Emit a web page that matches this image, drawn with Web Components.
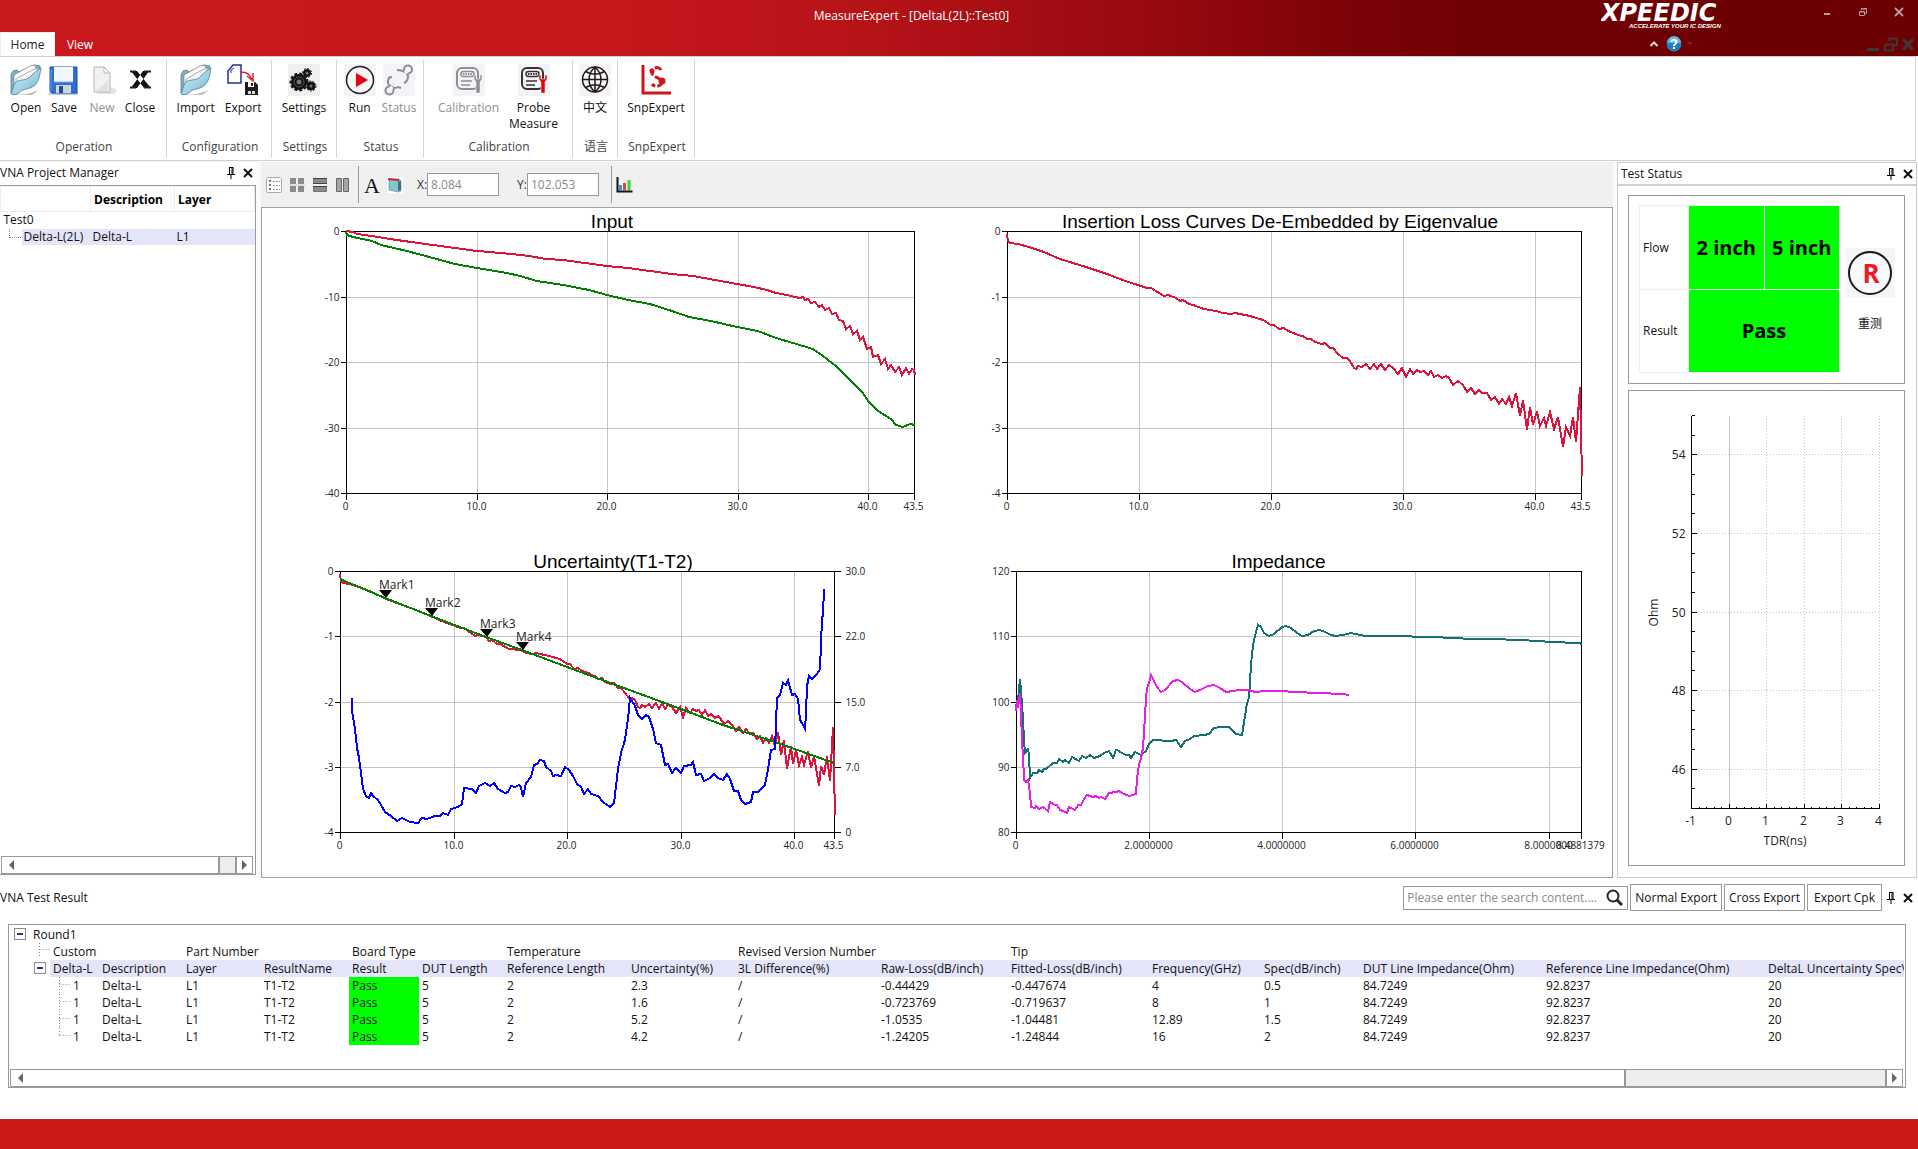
<!DOCTYPE html>
<html lang="en">
<head>
<meta charset="utf-8">
<title>MeasureExpert</title>
<style>
html, body { margin: 0; height: 100%; background: #fff; }
body { font: 12px/17px "Open Sans", "Noto Sans CJK SC", sans-serif; color: #111; overflow: hidden; }
</style>
</head>
<body>
<measure-app></measure-app>
<script>
const FOLDER = `<defs><linearGradient id="f" x1="0" y1="0" x2="1" y2="1"><stop offset="0" stop-color="#d9eff6"/><stop offset=".6" stop-color="#9ccfe3"/><stop offset="1" stop-color="#5fa4c0"/></linearGradient></defs>
<path d="M6 31h16l7-5-12 4z" fill="#bbb"/><path d="M1 29 V11 L3 7 L7 6 L9 8 L24 1 L30 2 L30 6 L6 26z" fill="#7fb0c4" stroke="#4c7f95" stroke-width=".8"/>
<path d="M4 22 V11 L20 2 L25 1 L27 10 L8 26z" fill="#fff" stroke="#888" stroke-width=".8"/><path d="M6 24 V15 L22 6 L28 4 L27 12" fill="#f4f4f4" stroke="#999" stroke-width=".8"/>
<path d="M1 30 C3 25 4 20 6 18 C10 15 17 17 21 12 C24 9 27 6 31 4 C30 10 29 17 25 21 C20 26 12 24 9 29 C7 31 3 31 1 30z" fill="url(#f)" stroke="#4c8299" stroke-width=".8"/>`;
const METER = (c, w) => `<rect width="32" height="32" fill="#f3f4f7"/><rect x="4" y="4" width="21" height="21" rx="5" fill="none" stroke="${c}" stroke-width="2"/><rect x="8" y="7.500" width="13" height="5" rx="2.500" fill="none" stroke="${c}" stroke-width="1.500"/><path d="M10 10h9" stroke="${c}" stroke-width="2" stroke-dasharray="1.500 1"/><path d="M8 17h11M8 21h9" stroke="${c}" stroke-width="1.500"/><path d="M21 11 v4 l2 3 v11 h4 v-11 l2-3 v-4 l-2 0 v4 h-4 v-4z" fill="${w}" stroke="#f3f4f7" stroke-width=".5"/>`;
const ICONS = {
  open: [32, 32, FOLDER],
  save: [32, 32, `<rect x="1" y="28" width="29" height="3" fill="#bcd"/><path d="M2 3h27v26H4l-2-2z" fill="#2e6fd0" stroke="#1b4fa3"/><rect x="6" y="3" width="19" height="15" fill="#f3f6fb"/><path d="M6 18h19" stroke="#7fb0ee"/><rect x="8" y="21" width="15" height="8" fill="#cfd5dc"/><rect x="11" y="22" width="4" height="7" fill="#1f4d9a"/><path d="M3 5v22" stroke="#6aa0ea"/>`],
  new: [32, 32, `<path d="M9 30h20l2-5-8-2z" fill="#e4e4e4"/><path d="M8 3h10l6 6v19H8z" fill="#f1f1f1" stroke="#b5b5b5"/><path d="M18 3v6h6z" fill="#fff" stroke="#b5b5b5"/><path d="M10 27l12-10v10z" fill="#e2e2e2"/>`],
  close: [32, 32, `<path d="M7 7l6 0 13 16-6 1z M25 7h-6L7 24h6z" fill="#111"/><path d="M6 7.500h6M20 7.500h7M6 23.500h6M20 23.500h7" stroke="#222" stroke-width="2"/>`],
  export: [32, 32, `<path d="M6 1h8v18H1V7z" fill="#fff" stroke="#2a2e93" stroke-width="1.500"/><path d="M4 9v-3l3-2" fill="none" stroke="#2a2e93"/><path d="M13 8c8 0 10 3 13 9M20 12l6 5v-8" fill="none" stroke="#e02630" stroke-width="1.500"/><path d="M18 18h10l3 3v10H18z" fill="#221c1e"/><rect x="21" y="18" width="6" height="5" fill="#fff"/><rect x="24" y="19" width="2" height="3" fill="#221c1e"/><rect x="21" y="27" width="7" height="3" fill="#ddd"/><rect x="24" y="27" width="1" height="3" fill="#221c1e"/>`],
  settings: [32, 32, `<rect width="32" height="32" fill="#efefef"/><g fill="#111" stroke="#111"><circle cx="11" cy="18" r="7.500"/><circle cx="11" cy="18" r="8.500" fill="none" stroke-width="2" stroke-dasharray="3 2"/><circle cx="19" cy="9" r="3.500"/><circle cx="19" cy="9" r="4.500" fill="none" stroke-dasharray="2 1.500"/><circle cx="23" cy="22" r="4"/><circle cx="23" cy="22" r="5" fill="none" stroke-dasharray="2 1.500"/></g><g fill="#777"><circle cx="11" cy="18" r="2.500"/><circle cx="19" cy="9" r="1.500"/><circle cx="23" cy="22" r="1.500"/></g><circle cx="11" cy="18" r="5" fill="none" stroke="#555"/>`],
  run: [32, 32, `<rect width="32" height="32" fill="#f3f4f7"/><circle cx="16" cy="16" r="13.500" fill="#f6f6f9" stroke="#231815" stroke-width="1.500"/><path d="M12 9l12 7-12 7z" fill="#e60012"/>`],
  status: [32, 32, `<rect width="32" height="32" fill="#f3f4f7"/><g fill="none" stroke="#8d8d8d" stroke-width="2"><path d="M14 6c5 0 7 1 10 4 2 2 1 5-1 8l-2 1"/><circle cx="25" cy="5.500" r="4"/><path d="M7 13c-2 2-3 5-1 8 2 2 6 4 9 2l3 1"/><path d="M5 14l4-1"/><circle cx="6.500" cy="26.500" r="4"/></g><circle cx="23" cy="8" r="2" fill="#f3f4f7"/><circle cx="8" cy="24" r="2" fill="#f3f4f7"/>`],
  calibration: [32, 32, METER('#8f8f8f', '#8f8f8f')],
  probe: [32, 32, METER('#3a3030', '#e60012')],
  globe: [32, 32, `<rect width="32" height="32" fill="#f3f4f7"/><g fill="none" stroke="#231815" stroke-width="1.500"><circle cx="16" cy="15.500" r="12.500"/><path d="M3 15.500h26M16 3v25M16 3c-8 7-8 18 0 25M16 3c8 7 8 18 0 25M6.500 7.500c6 3.500 13 3.500 19 0M6.500 23.500c6-3.500 13-3.500 19 0"/></g>`],
  snp: [32, 32, `<path d="M3 1v28h28" fill="none" stroke="#d0161b" stroke-width="3"/><path d="M21 6c-1-2-4-3-6-2-4 1-4 5-2 7 3 3 8 3 9 7 0 4-7 6-10 2" fill="none" stroke="#d0161b" stroke-width="3" stroke-dasharray="7 2"/><circle cx="22" cy="17" r="3.500" fill="#d0161b"/><circle cx="12" cy="7" r="2.500" fill="#d0161b"/>`],
  pin: [10, 14, `<path d="M3 1.500h4M3.500 1v7M6 1v7M7 1v7M1 8.500h8M5 9v4" fill="none" stroke="#000"/>`],
  cross: [12, 12, `<path d="M2 2l8 8M10 2l-8 8" stroke="#111" stroke-width="2"/>`],
  list: [16, 16, `<rect x=".5" y=".5" width="15" height="15" rx="1" fill="#fdfdfd" stroke="#aaa"/><path d="M3 4h2M3 8h2M3 12h2" stroke="#777" stroke-width="2"/><path d="M7 4.500h7M7 8.500h7M7 12.500h7" stroke="#999" stroke-dasharray="2 1"/>`],
  quad: [16, 16, `<path d="M1 1h6v6H1zM9 1h6v6H9zM1 9h6v6H1zM9 9h6v6H9z" fill="#8b8b8b"/><path d="M0 8h16" stroke="#ccc"/>`],
  rows: [16, 16, `<path d="M1.500 1.500h13v5h-13zM1.500 9.500h13v5h-13z" fill="#8b8b8b" stroke="#777"/><path d="M1 1.500h14M1 6.500h14M1 9.500h14" stroke="#444"/>`],
  cols: [16, 16, `<path d="M1.500 1.500h5v13h-5zM8.500 1.500h5v13h-5z" fill="#a5a5a5" stroke="#666"/>`],
  note: [16, 16, `<rect width="16" height="16" fill="#fff"/><path d="M2 3l10-1 2 2v10l-3 1-9-2z" fill="#86c5cd" stroke="#4f8e98" stroke-width=".6"/><path d="M11 4v10l3-1V4z" fill="#3b7480"/><path d="M1 2l11 1" stroke="#c8232c" stroke-width="2"/>`],
  bars: [18, 16, `<path d="M1.500 0v14.500h15" fill="none" stroke="#111" stroke-width="2"/><path d="M4.500 8v5" stroke="#2196f3" stroke-width="3"/><path d="M8.500 6v7" stroke="#e34234" stroke-width="3"/><path d="M13 3v10" stroke="#3fd13f" stroke-width="3"/>`],
  search: [18, 18, `<circle cx="8" cy="7" r="5.500" fill="none" stroke="#25252f" stroke-width="2"/><path d="M12 11l5 5" stroke="#25252f" stroke-width="3"/>`],
  min: [10, 10, `<path d="M2 7h6" stroke="#b99a9a" stroke-width="2"/>`],
  restore: [10, 10, `<path d="M3.500 3V1.500h5v5H7M1.500 4.500h5v4h-5z" fill="none" stroke="#b99a9a"/><path d="M3 2h6M1 5h6" stroke="#b99a9a"/>`],
  x: [10, 10, `<path d="M1 1l8 8M9 1l-8 8" stroke="#b99a9a" stroke-width="2"/>`],
  dmin: [14, 16, `<path d="M1 13.500h12" stroke="#3f3636" stroke-width="3"/>`],
  drestore: [14, 16, `<path d="M5 5V2.500h8v7h-3M1 8.500h8v6H1z" fill="none" stroke="#3f3636" stroke-width="2"/>`],
  dx: [14, 16, `<path d="M2 3l10 11M12 3L2 14" stroke="#3f3636" stroke-width="3"/>`],
  up: [10, 8, `<path d="M1.500 6L5 2.500 8.500 6" fill="none" stroke="#e8d8d8" stroke-width="2"/>`],
  help: [16, 16, `<circle cx="8" cy="8" r="7.500" fill="#1f7fbd"/><path d="M1 7a7 7 0 0 1 14 0z" fill="#5fb4e0"/><path d="M5.500 6c0-3 5-3 5 0 0 2-2.500 1.500-2.500 4" fill="none" stroke="#fff" stroke-width="2"/><rect x="7" y="11" width="2" height="2" fill="#fff"/>`],
  tri: [6, 4, `<path d="M0 0h6l-3 3z" fill="#b0141a"/>`],
  left: [6, 10, `<path d="M6 0v10L1 5z" fill="#666"/>`],
  right: [6, 10, `<path d="M0 0v10l5-5z" fill="#666"/>`],
  letter: [22, 28, `<text x="11" y="22" text-anchor="middle" font-family="Liberation Serif, serif" font-weight="400" font-size="22" fill="#111">A</text>`],
  retest: [50, 50, `<rect width="50" height="50" fill="#f4f5f8"/><circle cx="25" cy="25" r="21" fill="#f8f9fb" stroke="#231815" stroke-width="2"/><text x="26" y="35" text-anchor="middle" font-family="Open Sans, sans-serif" font-weight="700" font-size="26" fill="#ed1c24">R</text>`]
};

/* Shared reset for controls living in any shadow root */
const BASE = `*{box-sizing:border-box}button{font:inherit;color:inherit;background:none;border:0;padding:0;margin:0;cursor:pointer}button:disabled{color:#8f8f8f}input{font:inherit;color:#8a8a8a;border:1px solid #999;background:#fff;outline:0;padding:0 3px;margin:0}:host([hidden]){display:none}`;

class Base extends HTMLElement {
  connectedCallback() {
    if (this.shadowRoot) return;
    this.attachShadow({ mode: 'open' });
    this.shadowRoot.innerHTML = `<style>${BASE}${this.css()}</style>${this.html()}`;
    this.ready();
  }
  at(n, d = '') { return this.getAttribute(n) ?? d; }
  css() { return ''; }
  html() { return '<slot></slot>'; }
  ready() {}
}

customElements.define('ui-icon', class extends Base {
  css() { return ':host{display:inline-flex;flex:none}svg{display:block}'; }
  html() {
    const [w, h, body] = ICONS[this.at('name')];
    return `<svg width="${w}" height="${h}" viewBox="0 0 ${w} ${h}" aria-hidden="true">${body}</svg>`;
  }
});
const icon = n => `<ui-icon name="${n}"></ui-icon>`;

customElements.define('icon-button', class extends Base {
  css() { return `:host{display:flex;width:var(--w,20px)}button{display:flex;width:100%;min-height:16px;align-items:center;justify-content:center}`; }
  html() { return `<button aria-label="${this.at('label')}">${icon(this.at('name'))}</button>`; }
});

customElements.define('title-bar', class extends Base {
  css() { return `
    :host{display:block;background:linear-gradient(90deg,#ca191e 0,#c5171c 32%,#b61318 45%,#98090f 60%,#7c0307 70%,#6f0003 78%,#6c0003 100%);color:#fff}
    .row{display:flex;height:32px}
    .title{flex:1;padding-left:222px;text-align:center;line-height:32px}
    .right{width:317px;display:flex;justify-content:space-between;padding-right:1px}
    .logo{display:block}
    .ctl{display:flex;--w:36px;padding-top:4px;align-items:flex-start}
    .tabs{height:24px}
    .tabs button{width:55px;height:24px;line-height:24px;border:1px solid transparent;border-bottom:0}
    .tabs button.on{background:#fff;color:#222;border-color:#eee}
    .tabs .view{width:50px}
    .sp{flex:1}
    .mdi{--w:18px;display:flex;align-items:center;padding:0 2px 0 0}
    .hlp{display:flex;align-items:center;width:264px;padding-left:44px;--w:20px}`; }
  html() { return `
    <div class="row"><div class="title">MeasureExpert - [DeltaL(2L)::Test0]</div>
      <div class="right"><svg class="logo" width="140" height="32" fill="#fff"><text x="0" y="21" font-family="DejaVu Sans" font-size="24" font-weight="700" font-style="italic">XPEEDIC</text><text x="28" y="28" font-family="Liberation Sans" font-size="6" font-weight="700" font-style="italic">ACCELERATE YOUR IC DESIGN</text></svg>
      <div class="ctl"><icon-button name="min" label="Minimize"></icon-button><icon-button name="restore" label="Restore"></icon-button><icon-button name="x" label="Close"></icon-button></div></div></div>
    <div class="row tabs"><button class="on">Home</button><button class="view">View</button><span class="sp"></span>
      <div class="hlp"><icon-button name="up" label="Collapse ribbon"></icon-button><icon-button name="help" label="Help"></icon-button><icon-button name="tri" label="More" style="--w:12px"></icon-button></div>
      <div class="mdi"><icon-button name="dmin" label="Minimize document"></icon-button><icon-button name="drestore" label="Restore document"></icon-button><icon-button name="dx" label="Close document" style="--w:16px"></icon-button></div></div>`; }
});

customElements.define('ribbon-button', class extends Base {
  css() { return `:host{display:block}button{display:flex;flex-direction:column;align-items:center;padding:0 var(--pad,5px);text-align:center;white-space:pre-line;line-height:16px;gap:4px}`; }
  html() { return `<button ${this.hasAttribute('disabled') ? 'disabled' : ''}>${icon(this.at('icon'))}<span><slot></slot></span></button>`; }
});
customElements.define('ribbon-group', class extends Base {
  css() { return `:host{display:flex;flex-direction:column;border-right:1px solid #d4d4d4;margin:3px 0 2px;padding-top:4px}:host([dense]){--pad:3px}.b{display:flex;justify-content:center;flex:1}.l{text-align:center;color:#444;padding:0 0 3px 2px}`; }
  html() { return `<div class="b"><slot></slot></div><div class="l">${this.at('label')}</div>`; }
});
customElements.define('ribbon-bar', class extends Base {
  css() { return `:host{display:block;border:1px solid #d0d0d0;border-left:0;margin-right:2px;height:105px}nav{display:grid;height:100%;grid-template-columns:167px 105px 65px 87px 149px 45px 77px}`; }
  html() {
    const g = (label, ...b) => `<ribbon-group ${['Operation', 'Status'].includes(label) ? 'dense' : ''} label="${label}">${b.map(([i, t, d]) => `<ribbon-button icon="${i}" ${d ? 'disabled' : ''}>${t}</ribbon-button>`).join('')}</ribbon-group>`;
    return `<nav>${g('Operation', ['open', 'Open'], ['save', 'Save'], ['new', 'New', 1], ['close', 'Close'])}${g('Configuration', ['open', 'Import'], ['export', 'Export'])}${g('Settings', ['settings', 'Settings'])}${g('Status', ['run', 'Run'], ['status', 'Status', 1])}${g('Calibration', ['calibration', 'Calibration', 1], ['probe', 'Probe\nMeasure'])}${g('语言', ['globe', '中文'])}${g('SnpExpert', ['snp', 'SnpExpert'])}</nav>`;
  }
});

customElements.define('panel-tools', class extends Base {
  css() { return ':host{display:flex;--w:17px}'; }
  html() { return '<icon-button name="pin" label="Pin"></icon-button><icon-button name="cross" label="Close panel"></icon-button>'; }
});

customElements.define('scroll-bar', class extends Base {
  css() { return `:host{display:flex;height:18px;border:1px solid #999;background:#ededed;margin:0 2px 0 1px}button{width:17px;display:flex;align-items:center;justify-content:center;background:#fff}button:first-child{border-right:1px solid #999}.t{flex:${this.at('thumb')};background:#fff;border-right:2px solid #999}.r{flex:${this.at('rest')}}button:last-child{border-left:2px solid #999}`; }
  html() { return `<button aria-label="Scroll left">${icon('left')}</button><div class="t"></div><div class="r"></div><button aria-label="Scroll right">${icon('right')}</button>`; }
});

customElements.define('project-panel', class extends Base {
  css() { return `
    :host{display:flex;flex-direction:column;min-width:0}
    header{display:flex;justify-content:space-between;align-items:center;height:23px;padding-bottom:2px}
    .box{flex:1;display:flex;flex-direction:column;border:1px solid #999;border-left:0}
    table{border-collapse:collapse;table-layout:fixed;width:100%}
    th{height:25px;text-align:left;padding:0 3px;border:1px solid #ececec;border-top-color:#f4f4f4;font-weight:700;color:#000}
    td{padding:0 2px;height:16px;line-height:16px}
    tr.gap td{height:17px;padding-left:3px}
    .sel td{background:#e4e5f8;white-space:nowrap}
    .sel td:first-child{background:linear-gradient(90deg,#fff 21px,#e4e5f8 21px);padding-left:8px}
    .tree{display:inline-block;width:12px;height:9px;border-left:1px dotted #888;border-bottom:1px dotted #888;vertical-align:top;margin-right:3px}
    .sp{flex:1}`; }
  html() { return `<header><span class="title">VNA Project Manager</span><panel-tools></panel-tools></header>
    <div class="box"><table><colgroup><col style="width:90px"><col style="width:84px"><col></colgroup>
    <thead><tr><th></th><th>Description</th><th>Layer</th></tr></thead>
    <tbody><tr class="gap"><td colspan="3">Test0</td></tr><tr class="sel"><td><i class="tree"></i>Delta-L(2L)</td><td>Delta-L</td><td>L1</td></tr></tbody></table>
    <div class="sp"></div><scroll-bar thumb="201" rest="15"></scroll-bar></div>`; }
});

/* Curve samples, in the sample grid given by each plot's extent */
const S = {
  inputRed: [[199,1509,215,1000], '#dc143c', '199,215 215,219 225,225 260,231 300,239 350,249 400,257 450,267 500,274 530,279 580,284 620,291 660,298 700,303 750,311 800,321 850,327 900,334 950,344 1000,351 1050,362 1100,375 1140,384 1170,391 1190,401 1215,406 1235,412 1245,415 1252,413 1258,422 1265,420 1272,432 1280,427 1290,442 1297,438 1303,452 1314,447 1320,463 1330,461 1336,481 1345,484 1352,508 1361,500 1368,524 1377,516 1384,543 1392,533 1400,569 1409,563 1415,593 1425,586 1433,612 1442,600 1448,629 1457,615 1466,637 1474,622 1482,646 1490,625 1497,643 1505,627 1510,632 1511,646'],
  inputGreen: [[199,1509,215,1000], '#008000', '199,218 202,227 215,234 260,246 280,257 340,276 400,295 450,313 500,325 570,342 600,350 640,366 700,378 760,393 800,408 850,421 900,435 950,454 990,473 1040,484 1100,502 1150,515 1190,536 1230,552 1275,569 1300,590 1330,618 1360,659 1390,697 1405,727 1425,753 1455,777 1468,796 1483,803 1500,793 1511,796'],
  loss: [[113,1476,96,880], '#dc143c', '113,104 115,126 120,131 140,135 165,143 200,160 240,179 300,205 350,226 400,248 425,259 445,268 455,267 485,290 495,289 515,295 524,305 532,302 545,315 555,316 580,330 610,334 625,341 645,345 655,342 690,350 720,361 740,376 748,376 760,390 770,387 780,395 800,403 810,411 817,410 825,420 835,418 845,429 860,435 868,432 880,447 888,447 900,463 910,476 920,477 928,484 936,506 942,508 946,499 955,504 965,495 974,509 984,494 992,510 1002,494 1011,512 1019,498 1030,505 1041,524 1050,505 1060,534 1069,509 1078,524 1086,512 1094,518 1104,514 1112,528 1120,515 1127,532 1137,527 1147,537 1156,531 1162,537 1173,556 1183,546 1195,558 1206,577 1214,566 1225,584 1233,572 1242,582 1252,582 1263,602 1272,592 1281,613 1289,599 1298,614 1305,592 1313,621 1321,580 1331,650 1339,603 1347,692 1356,622 1362,676 1371,635 1379,679 1387,656 1394,680 1403,637 1412,688 1422,652 1434,743 1441,682 1449,709 1456,652 1464,728 1473,564 1478,830'],
  fit: [[80,1394,95,878], '#008000', '80,120 200,175 322,231 468,293 564,333 684,383 835,445 988,510 1100,556 1238,609 1394,670'],
  unc: [[80,1394,95,878], '#0000ff', '111,477 113,515 120,570 126,625 131,655 137,700 141,750 148,770 157,776 163,762 168,770 180,783 190,798 200,818 215,829 232,844 245,837 265,847 288,851 297,836 312,840 333,829 345,830 355,822 367,826 374,808 395,804 405,795 411,747 430,750 442,761 449,740 465,731 480,740 489,730 500,748 518,760 528,758 536,739 545,742 555,738 562,743 567,774 576,732 588,714 595,678 605,674 612,663 622,664 628,684 640,695 647,711 655,706 668,709 678,683 688,692 700,709 710,733 720,742 730,764 739,748 748,764 765,770 780,788 797,802 808,790 815,739 820,690 828,640 838,601 845,540 852,476 865,500 872,528 883,540 895,528 903,533 912,570 920,611 935,617 945,676 953,674 962,702 973,687 986,700 996,681 1014,678 1020,667 1026,706 1039,703 1048,724 1065,716 1075,704 1086,716 1098,723 1109,705 1118,718 1127,754 1138,754 1147,783 1156,793 1172,787 1178,758 1193,758 1210,738 1218,688 1227,632 1237,630 1243,475 1250,466 1258,430 1266,438 1272,421 1281,468 1290,464 1298,480 1304,543 1310,550 1316,570 1320,520 1322,440 1327,411 1336,420 1350,403 1357,389 1361,240 1365,225 1368,150'],
  teal: [[89,1474,93,878], '#177070', '90,500 93,480 98,418 102,455 105,535 108,600 110,640 116,635 119,624 122,650 124,716 130,702 140,702 145,693 152,697 158,688 163,690 180,669 190,669 195,658 203,668 210,660 218,671 227,653 243,665 251,650 260,656 270,645 280,655 295,648 305,640 317,634 326,655 333,630 337,630 350,640 358,645 365,647 370,655 380,638 395,645 407,634 415,614 425,602 440,600 455,603 470,605 480,600 493,621 503,605 515,598 525,590 550,586 563,582 575,565 590,561 610,561 618,572 628,582 644,586 650,530 655,490 660,475 663,420 668,340 672,300 678,275 683,255 690,262 697,278 710,290 722,282 740,260 750,257 763,265 778,280 790,289 805,285 820,273 835,271 847,275 860,284 873,289 890,284 910,279 945,288 1020,289 1100,293 1170,294 1200,297 1260,299 1320,300 1370,303 1400,306 1470,311 1476,313'],
  pink: [[89,1474,93,878], '#e81ee8', '90,513 92,480 95,505 99,460 102,520 104,605 107,650 108,722 113,727 119,722 123,760 126,804 135,807 138,800 145,810 155,803 167,814 173,787 185,796 190,797 196,812 205,814 213,822 219,803 234,811 240,798 248,798 256,780 264,768 278,774 285,771 292,777 298,774 307,779 317,760 333,758 342,756 350,762 366,770 382,765 386,720 390,675 395,655 400,625 404,530 407,475 411,445 416,430 420,407 428,423 434,443 445,457 455,451 475,425 487,422 497,427 515,449 528,457 545,447 560,438 575,437 590,445 605,456 620,455 635,450 660,450 675,457 700,453 735,454 775,457 830,460 890,462 905,465']
};
const X435 = { max: 43.5, ticks: [[0, '0'], [10, '10.0'], [20, '20.0'], [30, '30.0'], [40, '40.0'], [43.5, '43.5']] };
/* inset: top, right, bottom, left; lead: how far the title sits left of the plot's middle */
const PLOTS = {
  input: { title: 'Input', lead: 18, inset: [23, 23, 55, 84], x: X435, y: ['0', '-10', '-20', '-30', '-40'], s: ['inputRed', 'inputGreen'] },
  loss: { title: 'Insertion Loss Curves De-Embedded by Eigenvalue', lead: 14, inset: [23, 31, 55, 70], x: X435, y: ['0', '-1', '-2', '-3', '-4'], s: ['loss'] },
  uncertainty: { title: 'Uncertainty(T1-T2)', lead: -26, inset: [23, 103, 46, 78], x: X435, y: ['0', '-1', '-2', '-3', '-4'], y2: ['30.0', '22.0', '15.0', '7.0', '0'], s: ['loss', 'fit', 'unc'],
    marks: [['Mark1', 200, 175], ['Mark2', 322, 231], ['Mark3', 468, 293], ['Mark4', 564, 333]] },
  impedance: { title: 'Impedance', lead: 20, inset: [23, 31, 46, 79], x: { max: 8.4881379, ticks: [[0, '0'], [2, '2.0000000'], [4, '4.0000000'], [6, '6.0000000'], [8, '8.0000000'], [8.4881379, '8.4881379']] }, y: ['120', '110', '100', '90', '80'], s: ['teal', 'pink'] }
};

class Plot extends Base {
  css() { return ':host{display:block;position:relative;min-width:0;min-height:0;overflow:hidden}svg{display:block;position:absolute;inset:0;width:100%;height:100%}.g{stroke:#c4c4c4}.a{stroke:#000;fill:none}.a,.g,.c{shape-rendering:crispEdges}.c{fill:none;stroke-width:2}text{font-size:10px;fill:#222}.t{font:19px "Liberation Sans",sans-serif;fill:#000}.m{font-size:12px}'; }
  html() { return '<svg role="img"></svg>'; }
  ready() { new ResizeObserver(() => this.draw()).observe(this); }
}
customElements.define('line-plot', class extends Plot {
  draw() {
    const p = PLOTS[this.at('plot')], [t, r, b, l] = p.inset;
    const w = this.clientWidth - l - r, h = this.clientHeight - t - b, R = Math.round;
    const px = f => l + R(f * w) + .5, py = f => t + R(f * h) + .5;
    let o = `<text class="t" x="${l + w / 2 - p.lead}" y="${t - 3}" text-anchor="middle">${p.title}</text>`;
    for (const [v] of p.x.ticks.slice(1, -1)) o += `<path class="g" d="M${px(v / p.x.max)} ${py(0)}V${py(1)}"/>`;
    for (const f of [.25, .5, .75]) o += `<path class="g" d="M${px(0)} ${py(f)}H${px(1)}"/>`;
    o += `<path class="a" d="M${px(0)} ${py(0)}H${px(1)}V${py(1)}H${px(0)}z"/>`;
    for (const [v, s] of p.x.ticks) { const x = px(v / p.x.max); o += `<path class="a" d="M${x} ${py(1)}v6"/><text x="${x - 1}" y="${R(py(1)) + 16}" text-anchor="middle">${s}</text>`; }
    p.y.forEach((s, i) => { const y = py(i / 4); o += `<path class="a" d="M${px(0)} ${y}h-6"/><text x="${px(0) - 7}" y="${y + 3.5}" text-anchor="end">${s}</text>`; });
    (p.y2 || []).forEach((s, i) => { const y = py(i / 4); o += `<path class="a" d="M${px(1)} ${y}h6"/><text x="${px(1) + 11}" y="${y + 3.5}">${s}</text>`; });
    const map = ([x0, x1, y0, y1], x, y) => [l + (x - x0) / (x1 - x0) * w, t + (y - y0) / (y1 - y0) * h].map(R);
    for (const k of p.s) { const [e, c, d] = S[k]; o += `<polyline class="c" stroke="${c}" points="${d.split(' ').map(q => map(e, ...q.split(',')).join()).join(' ')}"/>`; }
    for (const [s, mx, my] of p.marks || []) { const [x, y] = map(S.fit[0], mx, my); o += `<path d="M${x - 6} ${y - 8}h13l-6 8z"/><text class="m" x="${x - 6}" y="${y - 9}">${s}</text>`; }
    this.shadowRoot.querySelector('svg').innerHTML = o;
  }
});
customElements.define('tdr-plot', class extends Plot {
  draw() {
    const l = 62, t = 24, w = this.clientWidth - l - 25, h = this.clientHeight - t - 57;
    const px = v => l + Math.round((v + 1) / 5 * w) + .5, py = v => t + Math.round((55 - v) / 10 * h) + .5;
    let o = '';
    for (let v = 0; v <= 4; v++) o += `<path class="g" ${v ? 'stroke-dasharray="1 2"' : ''} d="M${px(v)} ${py(55)}V${py(45)}"/>`;
    for (let v = 46; v < 55; v += 2) o += `<path class="g" stroke-dasharray="1 2" d="M${px(-1)} ${py(v)}H${px(4)}"/><path class="a" d="M${px(-1)} ${py(v)}h5"/><text class="m" x="${px(-1) - 6}" y="${py(v) + 4}" text-anchor="end">${v}</text>`;
    for (let i = 0; i <= 20; i++) o += `<path class="a" d="M${px(-1)} ${py(45 + i / 2)}h3"/>`;
    for (let i = 0; i <= 25; i++) o += `<path class="a" d="M${px(-1 + i / 5)} ${py(45)}v-${i % 5 ? 2 : 5}"/>`;
    for (let v = -1; v <= 4; v++) o += `<text class="m" x="${px(v) - 1}" y="${py(45) + 16}" text-anchor="middle">${v}</text>`;
    o += `<path class="a" d="M${px(-1)} ${py(55)}V${py(45)}H${px(4)}"/><text class="m" x="${l + w / 2}" y="${py(45) + 36}" text-anchor="middle">TDR(ns)</text><text class="m" text-anchor="middle" transform="translate(29 ${py(50)}) rotate(-90)">Ohm</text>`;
    this.shadowRoot.querySelector('svg').innerHTML = o;
  }
});

customElements.define('chart-panel', class extends Base {
  css() { return `
    :host{display:flex;flex-direction:column;min-width:0}
    .bar{display:flex;align-items:center;height:45px;background:#f0f0f0;padding:0 1px 0;--w:23px}
    hr{width:1px;height:37px;border:0;background:#999;margin:0 1px 0 4px}
    label{padding-left:11px;color:#333}label.y{padding-left:18px}
    input{width:72px;height:23px}
    input+hr{margin:0 2px 0 12px}
    .grid{flex:1;min-height:0;display:grid;grid-template-columns:1fr 1fr;grid-template-rows:339fr 329fr;border:1px solid #a0a0a0;background:#fff}`; }
  html() { return `<div class="bar">
    <icon-button name="list" label="List view"></icon-button><icon-button name="quad" label="Four plots"></icon-button><icon-button name="rows" label="Stack rows"></icon-button><icon-button name="cols" label="Side by side"></icon-button>
    <hr><icon-button name="letter" label="Text"></icon-button><icon-button name="note" label="Note"></icon-button>
    <label for="x">X:</label><input id="x" value="8.084"><label class="y" for="y">Y:</label><input id="y" value="102.053">
    <hr><icon-button name="bars" label="Histogram"></icon-button></div>
    <div class="grid"><line-plot plot="input"></line-plot><line-plot plot="loss"></line-plot><line-plot plot="uncertainty"></line-plot><line-plot plot="impedance"></line-plot></div>`; }
});

customElements.define('status-panel', class extends Base {
  css() { return `
    :host{display:flex;flex-direction:column;border:1px solid #ccc;min-width:0}
    header{display:flex;justify-content:space-between;align-items:center;height:23px;border-bottom:2px solid #d0d0d0;padding-left:3px}
    .in{flex:1;display:flex;flex-direction:column;gap:6px;padding:9px 11px 11px 10px}
    .card{border:1px solid #999}
    .top{height:189px;display:flex;padding:9px 9px 10px 10px}
    table{border-collapse:collapse;width:201px;height:168px;table-layout:fixed;color:#111}
    th{width:49px;font-weight:400;text-align:left;padding:0 3px;border:1px solid #eee}
    td{background:#0f0;border:1px solid #e8ffe8;text-align:center;font-weight:700;font-size:20px;padding:0;color:#000}
    .re{flex:1;display:flex;flex-direction:column;align-items:center;justify-content:center;padding:0 0 0 5px}
    .re button{display:flex;flex-direction:column;align-items:center;gap:17px;padding-top:2px}
    tdr-plot{flex:1}`; }
  html() { return `<header><span>Test Status</span><panel-tools></panel-tools></header>
    <div class="in"><div class="card top"><table><tr><th>Flow</th><td>2 inch</td><td>5 inch</td></tr><tr><th>Result</th><td colspan="2">Pass</td></tr></table>
    <div class="re"><button>${icon('retest')}<span>重测</span></button></div></div><tdr-plot class="card"></tdr-plot></div>`; }
});

const COLS = [90, 84, 78, 88, 70, 85, 124, 107, 143, 130, 141, 112, 99, 183, 222, 200];
const HEAD = ['Description', 'Layer', 'ResultName', 'Result', 'DUT Length', 'Reference Length', 'Uncertainty(%)', '3L Difference(%)', 'Raw-Loss(dB/inch)', 'Fitted-Loss(dB/inch)', 'Frequency(GHz)', 'Spec(dB/inch)', 'DUT Line Impedance(Ohm)', 'Reference Line Impedance(Ohm)', 'DeltaL Uncertainty SpecV'];
const ROWS = [['2.3', '-0.44429', '-0.447674', '4', '0.5'], ['1.6', '-0.723769', '-0.719637', '8', '1'], ['5.2', '-1.0535', '-1.04481', '12.89', '1.5'], ['4.2', '-1.24205', '-1.24844', '16', '2']];
customElements.define('result-panel', class extends Base {
  css() { return `
    :host{display:flex;flex-direction:column;height:241px;padding:6px 0 31px}
    header{display:flex;align-items:center;height:27px;gap:2px;margin-bottom:13px}
    h2{font:inherit;margin:0;flex:1}
    .s{display:flex;align-items:center;border:1px solid #999;height:24px;width:225px;padding-right:4px}
    .s input{flex:1;min-width:0;border:0;padding:0 3px}.s input::placeholder{color:#8a8a8a;opacity:1}
    .b{height:27px;border:1px solid #999;padding:0 4px;background:#fff}.b.w{padding:0 6px}
    panel-tools{margin-left:-2px;padding-right:2px}
    .box{flex:1;min-height:0;display:flex;flex-direction:column;border:1px solid #999;margin:0 12px 0 8px}
    .clip{flex:1;overflow:hidden;padding-top:1px;margin-right:1px}
    table{border-collapse:collapse;table-layout:fixed;width:1956px}
    td,th{height:17px;line-height:17px;padding:0 3px;font-weight:400;text-align:left;white-space:nowrap;overflow:hidden}
    tr>:first-child{padding:0}
    .h>*{background:#e4e5f8}
    .p{background:#0f0}
    .n{display:flex}.n svg{flex:none;background:#fff;margin-right:3px}
    .d{stroke:#888;stroke-dasharray:1 2;fill:none}.e{fill:#fff;stroke:#8a8a8a}`; }
  html() {
    const box = x => `<rect class="e" x="${x}.5" y="2.500" width="11" height="11"/><path d="M${x + 3} 8h6" stroke="#1c3a87" stroke-width="2"/>`;
    const node = (w, art, t) => `<div class="n"><svg width="${w}" height="17" aria-hidden="true">${art}</svg><span>${t}</span></div>`;
    return `<header><h2>VNA Test Result</h2><div class="s"><input aria-label="Search" placeholder="Please enter the search content....">${icon('search')}</div><button class="b">Normal Export</button><button class="b">Cross Export</button><button class="b w">Export Cpk</button><panel-tools></panel-tools></header>
    <div class="box"><div class="clip"><table><colgroup>${COLS.map(c => `<col style="width:${c}px">`).join('')}</colgroup>
    <tr><td colspan="16">${node(21, box(5), 'Round1')}</td></tr>
    <tr><td colspan="2">${node(41, '<path class="d" d="M30.500 0v15M30.500 6.500h11"/>', 'Custom')}</td><td colspan="2">Part Number</td><td colspan="2">Board Type</td><td colspan="2">Temperature</td><td colspan="2">Revised Version Number</td><td colspan="6">Tip</td></tr>
    <tr class="h"><th>${node(41, box(25), 'Delta-L')}</th>${HEAD.map(h => `<th>${h}</th>`).join('')}</tr>
    ${ROWS.map(([u, raw, fit, f, sp], i) => `<tr><td>${node(61, `<path class="d" d="M50.500 0V${i === 3 ? 8 : 17}M50.500 7.500h11"/>`, '1')}</td><td>Delta-L</td><td>L1</td><td>T1-T2</td><td class="p">Pass</td><td>5</td><td>2</td><td>${u}</td><td>/</td><td>${raw}</td><td>${fit}</td><td>${f}</td><td>${sp}</td><td>84.7249</td><td>92.8237</td><td>20</td></tr>`).join('')}
    </table></div><scroll-bar thumb="1600" rest="260"></scroll-bar></div>`;
  }
});

customElements.define('measure-app', class extends Base {
  css() { return `:host{display:flex;flex-direction:column;height:100vh}main{flex:1;min-height:0;display:grid;grid-template-columns:256px minmax(0,1fr) 300px;column-gap:4px;padding:1px 1px 0 0;background:#fafafa}project-panel{background:#fff;margin-bottom:3px}chart-panel{margin-left:1px}status-panel{background:#fff}footer{height:30px;background:#cc1a17}`; }
  html() { return `<title-bar></title-bar><ribbon-bar></ribbon-bar><main><project-panel></project-panel><chart-panel></chart-panel><status-panel></status-panel></main><result-panel></result-panel><footer></footer>`; }
});
</script>
</body>
</html>
